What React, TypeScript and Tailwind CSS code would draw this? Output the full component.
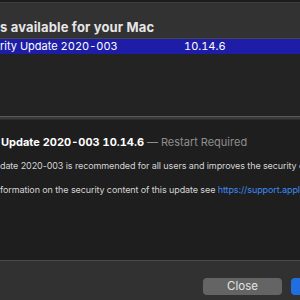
import React from "react";

export default function App() {
  return (
    <div
      className="w-[300px] h-[300px] overflow-hidden flex flex-col bg-[#1e1e1e] text-white"
      style={{ fontFamily: "Inter, 'Liberation Sans', sans-serif" }}
    >
      <div className="h-[3px] bg-[#1c1c1c] border-b border-[#3c3c3c]" />
      <div className="h-[36px] bg-[#323232] flex items-end pb-[3px] border-b border-[#474747]">
        <span className="text-[13px] font-bold text-[#e6e6e6] whitespace-nowrap leading-[16px] tracking-[0.15px]">
          s available for your Mac
        </span>
      </div>
      <div className="h-[77px] bg-[#232323] flex flex-col">
        <div className="h-[15px] bg-[#1d1da8] flex items-center text-[11px] text-white whitespace-nowrap leading-none tabular-nums">
          <span className="w-[184px]">rity Update 2020-003</span>
          <span>10.14.6</span>
        </div>
      </div>
      <div className="h-[4px] bg-[#3a3a3a] border-t border-[#5a5a5a] border-b border-b-[#2c2c2c]" />
      <div className="flex-1 bg-[#1e1e1e] flex flex-col whitespace-nowrap">
        <div className="mt-[15px] pl-[1px] text-[11px] leading-[14px] tabular-nums">
          <span className="font-bold text-white">Update 2020-003 10.14.6</span>
          <span className="text-[#8e8e8e]"> — Restart Required</span>
        </div>
        <div className="mt-[11px] text-[9px] leading-[12px] text-[#d4d4d4] tracking-[-0.1px]">
          date 2020-003 is recommended for all users and improves the security of macOS.
        </div>
        <div className="mt-[12px] text-[9px] leading-[12px] text-[#d4d4d4] tracking-[-0.1px]">
          formation on the security content of this update see{" "}
          <span className="text-[#3d8af5]">https://support.apple.com</span>
        </div>
      </div>
      <div className="h-[40px] bg-[#313131] border-t border-[#4a4a4a] flex justify-end items-start pt-[17px] gap-[9px] -mr-[20px]">
        <div className="w-[79px] h-[17px] rounded-[4px] bg-[#646464] text-[11.5px] text-[#e4e4e4] flex items-center justify-center leading-none">
          Close
        </div>
        <div className="w-[29px] h-[17px] rounded-[4px] bg-[#1f6fe0]" />
      </div>
    </div>
  );
}
